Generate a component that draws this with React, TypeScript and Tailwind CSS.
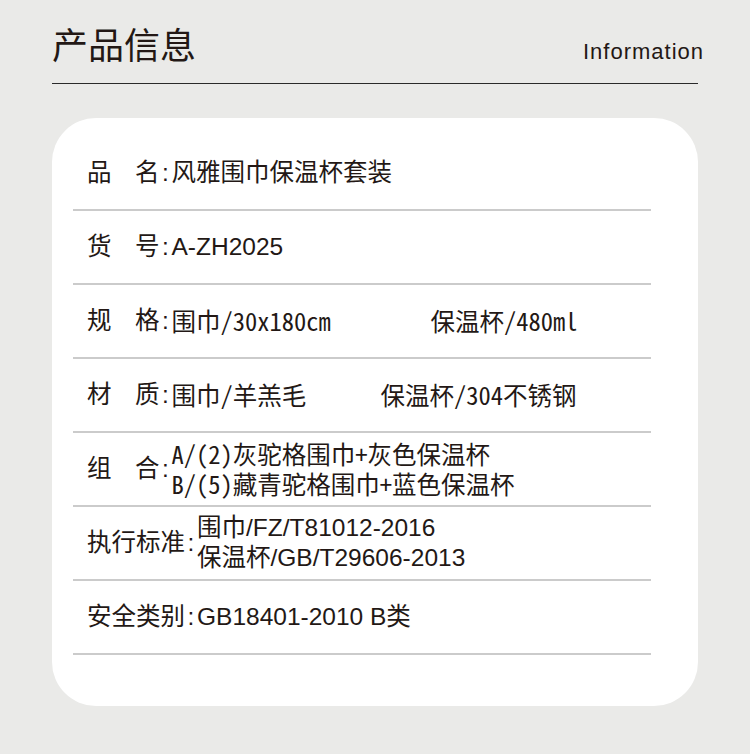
import React from 'react';

const SANS = "font-['Liberation_Sans','Noto_Sans_CJK_SC',sans-serif]";
const MONO = "font-['Noto_Sans_Mono_CJK_SC','Noto_Sans_CJK_SC',monospace]";

type Row = {
  label: string[];
  lines: React.ReactNode[];
  mono?: boolean;
};

const ROWS: Row[] = [
  { label: ['品', '名'], lines: ['风雅围巾保温杯套装'] },
  { label: ['货', '号'], lines: ['A-ZH2025'] },
  {
    label: ['规', '格'],
    mono: true,
    lines: [
      <div className="flex" key="a">
        <span className="w-[259px]">围巾/30x180cm</span>
        <span>保温杯/480ml</span>
      </div>,
    ],
  },
  {
    label: ['材', '质'],
    mono: true,
    lines: [
      <div className="flex" key="a">
        <span className="w-[209px]">围巾/羊羔毛</span>
        <span>保温杯/304不锈钢</span>
      </div>,
    ],
  },
  {
    label: ['组', '合'],
    mono: true,
    lines: ['A/(2)灰驼格围巾+灰色保温杯', 'B/(5)藏青驼格围巾+蓝色保温杯'],
  },
  { label: ['执行标准'], lines: ['围巾/FZ/T81012-2016', '保温杯/GB/T29606-2013'] },
  { label: ['安全类别'], lines: ['GB18401-2010 B类'] },
];

function InfoRow({ row }: { row: Row }) {
  return (
    <>
      <div className="h-[72px] flex items-center pl-[14px] text-[24.5px] text-[#231815]">
        {row.label.length === 2 ? (
          <>
            <span className={`w-[48px] ${SANS}`}>{row.label[0]}</span>
            <span className={SANS}>{row.label[1]}</span>
          </>
        ) : (
          <span className={SANS}>{row.label[0]}</span>
        )}
        <span className={`w-[12px] text-center ${SANS}`}>:</span>
        <div className={`flex flex-col leading-[30px] ${row.mono ? MONO : SANS}`}>
          {row.lines.map((l, i) => (
            <div key={i}>{l}</div>
          ))}
        </div>
      </div>
      <div className="h-[2px] bg-[#cbcbcb]" />
    </>
  );
}

export default function App() {
  return (
    <div className="w-[750px] h-[754px] bg-[#eaeae8] px-[52px] overflow-hidden">
      {/* 标题 */}
      <div className="pt-[29px] pb-[18px] flex items-end justify-between border-b border-[#2a2a2a]">
        <h1 className={`text-[36px] leading-[36px] text-[#231815] ${SANS}`}>产品信息</h1>
        <span className={`text-[22px] leading-[22px] tracking-[1px] mb-[2px] mr-[-6px] text-[#231815] ${SANS}`}>
          Information
        </span>
      </div>

      {/* 信息卡片 */}
      <div className="mt-[34px] bg-white rounded-[44px] pt-[19px] pb-[51px] pl-[21px] pr-[47px]">
        {ROWS.map((r, i) => (
          <InfoRow key={i} row={r} />
        ))}
      </div>
    </div>
  );
}
